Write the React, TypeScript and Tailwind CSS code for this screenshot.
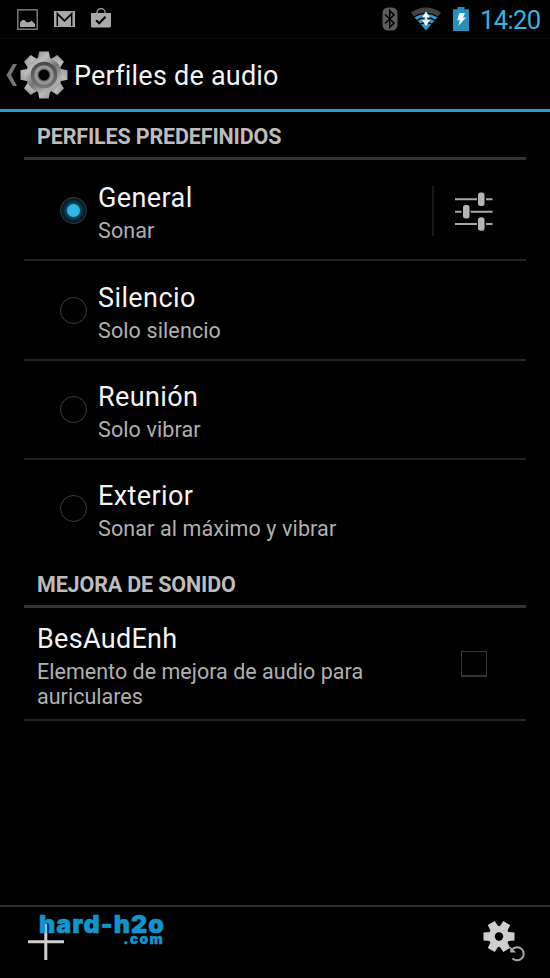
import React, { useState } from 'react';

const GEAR_ANGLES = [0, 45, 90, 135, 180, 225, 270, 315];
const COG_ANGLES = [30, 90, 150, 210, 270, 330];

const profiles = [
  { name: 'General', summary: 'Sonar', editable: true },
  { name: 'Silencio', summary: 'Solo silencio' },
  { name: 'Reunión', summary: 'Solo vibrar' },
  { name: 'Exterior', summary: 'Sonar al máximo y vibrar' },
];

const StatusBar: React.FC = () => (
  <div className="flex h-[39px] shrink-0 items-center border-b border-[#080808] pl-[17px] pr-[9px]">
    <svg width="21" height="21" viewBox="0 0 21 21">
      <rect x="0.8" y="0.8" width="19.4" height="19.4" fill="none" stroke="#8c8c8c" strokeWidth="1.3" />
      <path d="M3 18v-4.500l2.500-2.500h2l2.500 2.500 1.500-.5 1.500 0 1.500-1.500 3.500 3.500v3z" fill="#a8a8a8" />
    </svg>
    <svg className="ml-4" width="21" height="16" viewBox="0 0 21 16">
      <rect width="21" height="16" fill="#a8a8a8" />
      <path d="M3.300 15V3l7.200 7 7.200-7v12" fill="none" stroke="#000" strokeWidth="1.500" />
      <path d="M2.500 1.200l8 7.800 8-7.800" fill="none" stroke="#000" strokeWidth="0.9" />
    </svg>
    <svg className="ml-4 -mt-0.5" width="20" height="20" viewBox="0 0 20 20">
      <path d="M6 6V4a4 3.300 0 0 1 8 0v2" fill="none" stroke="#a8a8a8" strokeWidth="1.200" />
      <path d="M0 5h20v13a1.500 1.500 0 0 1-1.500 1.500h-17A1.500 1.500 0 0 1 0 18z" fill="#a8a8a8" />
      <path d="M5.200 12.300l3 3 6.300-6.500" fill="none" stroke="#000" strokeWidth="2.200" />
    </svg>

    <svg className="ml-auto" width="16" height="24" viewBox="0 0 16 24">
      <rect x="0.500" y="0.500" width="15" height="23" rx="5.500" fill="#5c5c5c" />
      <path d="M3 7.500l9 8.500-4.300 4.500V3.500L12 8l-9 8.500" fill="none" stroke="#000" strokeWidth="1.500" />
    </svg>
    <svg className="ml-3" width="32" height="24" viewBox="0 0 32 24">
      <path d="M1 5.500Q16-4.500 31 5.500L28 9.500Q16 2 4 9.500z" fill="#424242" />
      <path d="M4.500 10.300Q16 3 27.500 10.300L16 23.500z" fill="#2c96c4" />
      <path d="M6.500 13.500Q16 7.500 25.500 13.500M9.500 17.500Q16 13.500 22.500 17.500" fill="none" stroke="#000" strokeWidth="1.300" />
      <path d="M16 4.500l4 6h-8zM16 19l-4-6h8z" fill="#fff" />
      <path d="M14.800 9.500h2.400v5h-2.400z" fill="#c8eaff" />
    </svg>
    <svg className="ml-[11px]" width="16" height="24" viewBox="0 0 16 24">
      <path d="M4.500 0h7v2.200H16V24H0V2.200h4.500z" fill="#2890b8" />
      <path d="M6.500 6H12l-2 4.500h3L5.300 19l1.700-5.700H4.200z" fill="#eef8ff" />
    </svg>
    <span className="ml-[11px] w-[61px] whitespace-nowrap pt-[3px] text-[25.500px] leading-none tracking-[-0.6px] text-[#33b5e5]">14:20</span>
  </div>
);

const SettingsGear: React.FC = () => (
  <svg className="ml-[3px]" width="48" height="48" viewBox="-24 -24 48 48">
    <defs>
      <linearGradient id="metal" gradientUnits="userSpaceOnUse" x1="-16" y1="-20" x2="16" y2="20">
        <stop offset="0" stopColor="#8c8c8c" />
        <stop offset="0.25" stopColor="#bcbcbc" />
        <stop offset="0.5" stopColor="#747474" />
        <stop offset="0.75" stopColor="#b0b0b0" />
        <stop offset="1" stopColor="#8c8c8c" />
      </linearGradient>
      <linearGradient id="ring" x1="0" y1="0" x2="0" y2="1">
        <stop offset="0" stopColor="#484848" />
        <stop offset="1" stopColor="#787878" />
      </linearGradient>
    </defs>
    <g fill="url(#metal)">
      {GEAR_ANGLES.map((angle) => (
        <path key={angle} d="M-6.500-15l1.800-8.500h9.400L6.500-15z" transform={`rotate(${angle})`} />
      ))}
      <circle r="18" />
    </g>
    <circle r="13.300" fill="url(#ring)" />
    <circle r="9.800" fill="#969696" />
    <circle r="6.500" fill="#555" />
    <circle r="5.200" fill="#000" />
  </svg>
);

const ActionBar: React.FC = () => (
  <header className="flex h-[73px] shrink-0 items-center border-b-[3px] border-[#2b9cc7] pl-1.5 pt-0.5">
    <svg width="11" height="22" viewBox="0 0 11 22">
      <path d="M7 0h4L5 11l6 11H7L0.500 11z" fill="#777" />
    </svg>
    <SettingsGear />
    <h1 className="ml-1.5 pt-0.5 text-[27px] leading-8 tracking-[0.22px] text-[#f3f3f3]">Perfiles de audio</h1>
  </header>
);

const SectionTitle: React.FC<{ children: React.ReactNode }> = ({ children }) => (
  <h2 className="flex h-12 items-center border-b-[3px] border-[#333] pl-[13px] pt-[5px] text-[21.500px] font-bold leading-6 tracking-[-0.15px] text-[#bcbcbc]">
    {children}
  </h2>
);

const Radio: React.FC<{ checked: boolean }> = ({ checked }) => (
  <span
    className={`flex size-[27px] shrink-0 items-center justify-center rounded-full border ${
      checked ? 'border-[#34434a] bg-[#06151b]' : 'border-[#3d3d3d]'
    }`}
  >
    {checked && <span className="size-[13px] rounded-full bg-[#33b5e5] shadow-[0_0_5px_2px_#12678a]" />}
  </span>
);

const Tune: React.FC = () => (
  <svg width="38" height="40" viewBox="0 0 38 40">
    <path
      d="M0 8.300h22M31 8.300h6.500M0 20.700h6.500M15.500 20.700h22M0 33h22M31 33h6.500"
      stroke="#a8a8a8"
      strokeWidth="2"
    />
    <g fill="#b4b4b4">
      <rect x="23" y="1.500" width="6.500" height="13.500" rx="2.500" />
      <rect x="8" y="14" width="6.500" height="13.500" rx="2.500" />
      <rect x="23" y="26.300" width="6.500" height="13.500" rx="2.500" />
    </g>
  </svg>
);

const BottomBar: React.FC = () => (
  <footer className="relative flex h-[73px] shrink-0 items-center justify-between border-t-2 border-[#303030] pb-0.5 pl-7 pr-6">
    <svg width="36" height="36" viewBox="0 0 36 36">
      <path d="M17.800 0v36M0 17.800h36" stroke="#d0d0d0" strokeWidth="3" />
    </svg>
    <div className="absolute left-[39px] top-[7px] w-[125px] font-['Inter','Liberation_Sans',sans-serif] font-black text-[#1096cb]">
      <div className="whitespace-nowrap text-[25px] leading-[21px] tracking-[1.1px] [-webkit-text-stroke:0.6px_#1096cb]">hard-h2o</div>
      <div className="-mt-px text-right text-[14px] leading-[10px] tracking-[1.3px] [-webkit-text-stroke:0.3px_#1096cb]">.com</div>
    </div>
    <svg className="absolute left-[45px] top-[17px]" width="2" height="9">
      <rect width="2" height="9" fill="#8cc3dc" />
    </svg>
    <svg width="43" height="44" viewBox="0 0 43 44">
      <g transform="translate(16 16.500)" fill="#cfcfcf">
        {COG_ANGLES.map((angle) => (
          <path key={angle} d="M-4.500-8l.5-7.500h8l.5 7.500z" transform={`rotate(${angle})`} />
        ))}
        <circle r="10.500" />
        <circle r="4.200" fill="#000" />
      </g>
      <path d="M29.500 29a6.600 6.600 0 1 1 0 9.500" fill="none" stroke="#aaa" strokeWidth="2" />
      <path d="M27.200 26.500v6h6z" fill="#aaa" />
    </svg>
  </footer>
);

export default function App() {
  const [selected, setSelected] = useState('General');
  const [enhanced, setEnhanced] = useState(false);

  return (
    <div className="flex h-[978px] w-[550px] flex-col overflow-hidden bg-black font-['Roboto','Liberation_Sans',sans-serif]">
      <StatusBar />
      <ActionBar />

      <main className="flex-1 px-6">
        <SectionTitle>PERFILES PREDEFINIDOS</SectionTitle>
        <ul className="pt-0.5">
          {profiles.map((profile) => (
            <li
              key={profile.name}
              className="flex h-[99.400px] items-center border-b-2 border-[#222] pl-9 last:border-transparent"
              onClick={() => setSelected(profile.name)}
            >
              <Radio checked={selected === profile.name} />
              <div className="ml-[11px] pt-[5px]">
                <div className="text-[27px] leading-8 tracking-[0.4px] text-[#f3f3f3]">{profile.name}</div>
                <div className="mt-1 text-[21.500px] leading-[26px] tracking-[0.12px] text-[#b0b0b0]">{profile.summary}</div>
              </div>
              {profile.editable && (
                <div className="ml-auto mr-[33px] flex h-[50px] items-center border-l-2 border-[#1a1a1a] pl-[21px]">
                  <Tune />
                </div>
              )}
            </li>
          ))}
        </ul>

        <SectionTitle>MEJORA DE SONIDO</SectionTitle>
        <div
          className="flex h-[113px] items-center justify-between border-b-2 border-[#222] pl-[13px] pr-[39px]"
          onClick={() => setEnhanced(!enhanced)}
        >
          <div className="w-[350px] pt-[5px]">
            <div className="text-[27px] leading-8 tracking-[0.3px] text-[#f3f3f3]">BesAudEnh</div>
            <div className="mt-1 text-[21.500px] leading-[25px] tracking-[0.02px] text-[#b0b0b0]">
              Elemento de mejora de audio para auriculares
            </div>
          </div>
          <span className={`mt-0.5 size-[26px] border border-b-2 border-[#353535] ${enhanced ? 'bg-[#33b5e5]' : ''}`} />
        </div>
      </main>

      <BottomBar />
    </div>
  );
}
